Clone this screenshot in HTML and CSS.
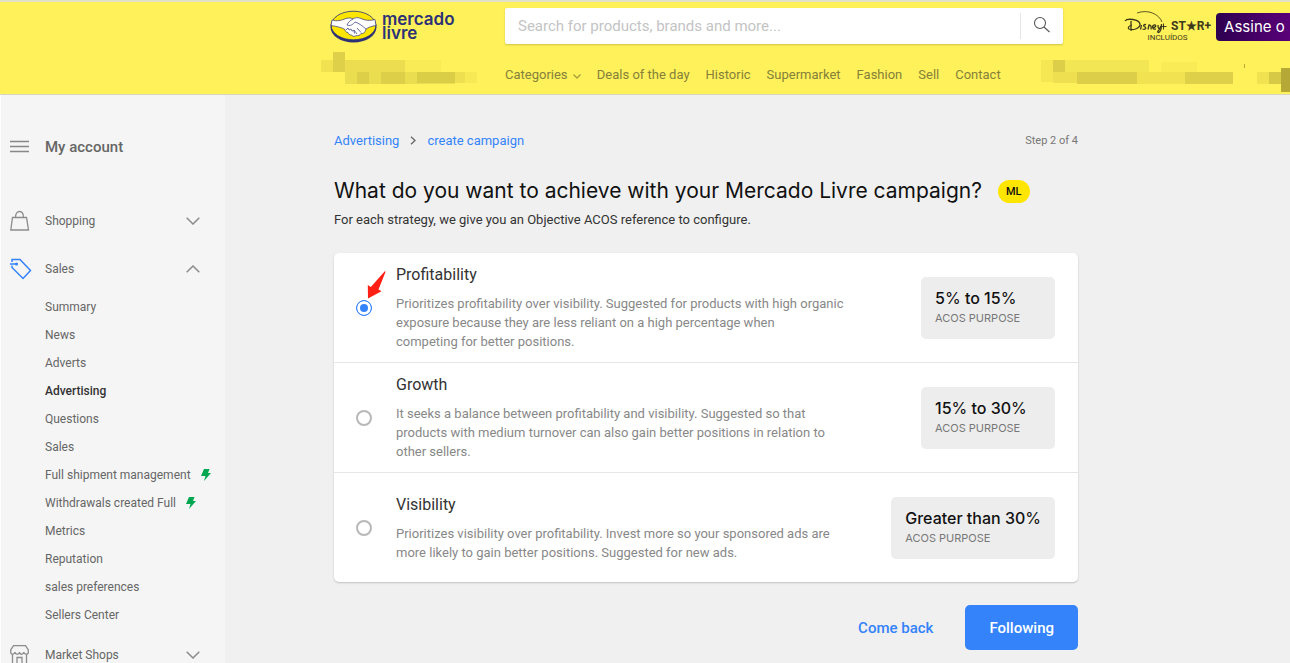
FILE: index.html
```html
<!DOCTYPE html>
<html lang="en">
<head>
    <meta charset="UTF-8">
    <meta name="viewport" content="width=device-width, initial-scale=1.0">
    <title>Create campaign</title>
    <link rel="stylesheet" href="styles.css">
</head>
<body>
    <header class="header">
        <a href="#" class="logo">
            <svg width="47" height="33" viewBox="0 0 47 33" aria-hidden="true">
                <ellipse cx="23.500" cy="17" rx="23" ry="15.500" fill="#2d3277"/>
                <ellipse cx="23.500" cy="15.500" rx="22.300" ry="14.300" fill="#ffe600" stroke="#2d3277" stroke-width=".8"/>
                <path d="M2 10c5 1.500 9 .5 14-1.500 3-1 5-.5 7 .5 2-1.500 5-2 8-.5 4 2 9 2.500 14 1l1 6c-4 .5-8 2-10 3.500-1 4-3 5-5 4.500-1 2-3 2.500-4.500 2-2 1.500-4 1-5-.5-2 0-3-1-3.500-2.500-2 0-3-1.500-3-3-3-2-8-3-14-4z" fill="#fff" stroke="#2d3277" stroke-width=".7"/>
                <path d="M23 9c-3 1.500-5 3.500-6 6 3 1.500 6-.5 8-3 4 1 8 4.500 11 7M27 18l4 4.500M24 20l3 4M16 20l2-2 1 2 2-1 1 2 2-.5.500 3" fill="none" stroke="#2d3277" stroke-width=".7"/>
            </svg>
            <span class="logo-text">mercado<br>livre</span>
        </a>
        <form class="search">
            <input type="text" class="search-input" placeholder="Search for products, brands and more..." aria-label="Search">
            <button type="button" class="search-button" aria-label="Search">
                <svg width="18" height="18" viewBox="0 0 18 18" fill="none" stroke="#555" stroke-width="1.100">
                    <circle cx="7" cy="7" r="5.500"/>
                    <path d="M11 11l5.500 5"/>
                </svg>
            </button>
        </form>
        <div class="promo">
            <div class="promo-brands">
                <div class="promo-logos">
                    <svg width="43" height="24" viewBox="0 0 43 24" role="img" aria-label="Disney+">
                        <path d="M13 2c11-4 22 1 25 9" fill="none" stroke="#4a4620" stroke-width=".9"/>
                        <path d="M1 10c2-3 14-2 15 3 .5 4-7 7-11 5-1.500-1-.5-3 3-4M7 10v10" fill="none" stroke="#3d3a1c" stroke-width="1.300"/>
                        <path d="M17.500 14l-1 4.500M22 13.500c-3 0-3 1.500-1 2.500 2 1.200 0 3-2.500 2M24 18.500l1-4.500c2 0 2.500 2 2 4.500M29 16.500c4-.5 3-3 1-2.500-2.500 1-1.500 5 2 4M34 14c0 4 1 5 3 1m.5-2c0 4-1 8-3 8.500-2 0 0-3 3-4" fill="none" stroke="#3d3a1c" stroke-width="1.300"/>
                        <path d="M36.500 15.500h6M39.500 12.500v6" stroke="#3d3a1c"/>
                    </svg>
                    <span class="star">ST★R+</span>
                </div>
                <span class="promo-note">INCLUÍDOS</span>
            </div>
            <a href="#" class="promo-button">Assine o</a>
        </div>
        <svg class="blocks" width="160" height="34" viewBox="0 0 160 34" aria-hidden="true">
            <g fill="#6b6014">
                <rect x="1" y="8" width="12" height="12" opacity=".1"/>
                <rect x="13" y="0" width="12" height="20" opacity=".22"/>
                <rect x="25" y="8" width="60" height="12" opacity=".13"/>
                <rect x="85" y="8" width="36" height="12" opacity=".04"/>
                <rect x="25" y="20" width="110" height="12" opacity=".14"/>
                <rect x="37" y="20" width="12" height="12" opacity=".1"/>
                <rect x="61" y="20" width="24" height="12" opacity=".1"/>
                <rect x="97" y="20" width="48" height="11" opacity=".12"/>
                <rect x="145" y="20" width="12" height="11" opacity=".05"/>
            </g>
        </svg>
        <nav class="nav">
            <a href="#">Categories
                <svg width="8" height="5" viewBox="0 0 8 5" fill="none" stroke="#a89d3b" stroke-width="1.300"><path d="M.5.5L4 4 7.500.5"/></svg>
            </a>
            <a href="#">Deals of the day</a>
            <a href="#">Historic</a>
            <a href="#">Supermarket</a>
            <a href="#">Fashion</a>
            <a href="#">Sell</a>
            <a href="#">Contact</a>
        </nav>
        <svg class="blocks blocks-right" width="249" height="34" viewBox="0 0 249 34" aria-hidden="true">
            <g fill="#6b6014">
                <rect x="0" y="1" width="12" height="22" opacity=".07"/>
                <rect x="12" y="1" width="12" height="12" opacity=".24"/>
                <rect x="24" y="1" width="84" height="12" opacity=".08"/>
                <rect x="120" y="3" width="36" height="10" opacity=".04"/>
                <rect x="12" y="13" width="24" height="11" opacity=".12"/>
                <rect x="36" y="13" width="60" height="12" opacity=".24"/>
                <rect x="96" y="13" width="48" height="12" opacity=".1"/>
                <rect x="144" y="13" width="48" height="12" opacity=".22"/>
                <rect x="203" y="5" width="1" height="4" opacity=".5"/>
                <rect x="216" y="13" width="12" height="12" opacity=".1"/>
                <rect x="228" y="13" width="12" height="12" opacity=".28"/>
                <rect x="240" y="9" width="9" height="24" opacity=".5"/>
            </g>
        </svg>
    </header>

    <div class="page">
        <aside class="sidebar">
            <div class="account">
                <svg class="side-icon" width="20" height="20" viewBox="0 0 20 20" stroke="#888" stroke-width="1.600"><path d="M0 4.500h19M0 9.500h19M0 14.500h19"/></svg>
                <span>My account</span>
            </div>
            <a href="#" class="group">
                <svg class="side-icon" width="20" height="22" viewBox="0 0 20 22" fill="none" stroke="#8c8c8c" stroke-width="1.300"><path d="M2.500 7.500h14l2 12.500H.8zM5.500 7.500c0-8 8-8 8 0"/></svg>
                <span>Shopping</span>
                <svg class="chevron" width="14" height="8" viewBox="0 0 14 8" fill="none" stroke="#8c8c8c" stroke-width="1.500"><path d="M.7.7L7 7 13.300.7"/></svg>
            </a>
            <a href="#" class="group">
                <svg class="side-icon" width="22" height="22" viewBox="0 0 22 22" fill="none" stroke="#3483fa" stroke-width="1.500"><path d="M2 4V1.500h8L20.500 12.500 13 20.500 2 9.500V7.500M0 6h6"/><circle cx="6.500" cy="6" r=".8"/></svg>
                <span>Sales</span>
                <svg class="chevron" width="14" height="8" viewBox="0 0 14 8" fill="none" stroke="#8c8c8c" stroke-width="1.500"><path d="M.7 7.300L7 1l6.300 6.300"/></svg>
            </a>
            <ul class="submenu">
                <li><a href="#">Summary</a></li>
                <li><a href="#">News</a></li>
                <li><a href="#">Adverts</a></li>
                <li><a href="#" class="active">Advertising</a></li>
                <li><a href="#">Questions</a></li>
                <li><a href="#">Sales</a></li>
                <li><a href="#">Full shipment management
                    <svg width="10" height="12" viewBox="0 0 10 12" fill="#00a650"><path d="M3 0h5.500L7 4h3L3 12l1.500-5H0z"/></svg></a></li>
                <li><a href="#">Withdrawals created Full
                    <svg width="10" height="12" viewBox="0 0 10 12" fill="#00a650"><path d="M3 0h5.500L7 4h3L3 12l1.500-5H0z"/></svg></a></li>
                <li><a href="#">Metrics</a></li>
                <li><a href="#">Reputation</a></li>
                <li><a href="#">sales preferences</a></li>
                <li><a href="#">Sellers Center</a></li>
            </ul>
            <a href="#" class="group">
                <svg class="side-icon" width="20" height="20" viewBox="0 0 20 20" fill="none" stroke="#8c8c8c" stroke-width="1.300"><path d="M3.500.7h12l2.800 4.300v2c0 3-4 3-4.500 0-.5 3-4 3-4.300 0-.5 3-4 3-4.500 0-.5 3-4.300 3-4.300 0V5zM2.500 9.500v10h14v-10M7 19.500v-7h5v7"/></svg>
                <span>Market Shops</span>
                <svg class="chevron" width="14" height="8" viewBox="0 0 14 8" fill="none" stroke="#8c8c8c" stroke-width="1.500"><path d="M.7.7L7 7 13.300.7"/></svg>
            </a>
        </aside>

        <main class="main">
            <div class="topline">
                <nav class="breadcrumb">
                    <a href="#">Advertising</a>
                    <svg width="6" height="9" viewBox="0 0 6 9" fill="none" stroke="#666" stroke-width="1.300"><path d="M1 .7l4 3.800L1 8.300"/></svg>
                    <a href="#">create campaign</a>
                </nav>
                <span class="step">Step 2 of 4</span>
            </div>
            <div class="title">
                <h1>What do you want to achieve with your Mercado Livre campaign?</h1>
                <span class="tag">ML</span>
            </div>
            <p class="subtitle">For each strategy, we give you an Objective ACOS reference to configure.</p>

            <form>
                <div class="card">
                    <div class="option">
                        <div class="choice">
                            <input type="radio" name="strategy" id="profitability" checked>
                            <svg class="pointer" width="19" height="28" viewBox="0 0 19 28" fill="#ff2015"><path d="M18 0l.5 1-7 17.500 3 1.800L1 27.500.8 14l3 2z"/></svg>
                        </div>
                        <label class="text" for="profitability">
                            <span class="name">Profitability</span>
                            <span class="desc">Prioritizes profitability over visibility. Suggested for products with high organic<br>exposure because they are less reliant on a high percentage when<br>competing for better positions.</span>
                        </label>
                        <div class="acos">
                            <strong>5<span>%</span> to 15<span>%</span></strong>
                            <small>ACOS PURPOSE</small>
                        </div>
                    </div>
                    <div class="option">
                        <div class="choice">
                            <input type="radio" name="strategy" id="growth">
                        </div>
                        <label class="text" for="growth">
                            <span class="name">Growth</span>
                            <span class="desc">It seeks a balance between profitability and visibility. Suggested so that<br>products with medium turnover can also gain better positions in relation to<br>other sellers.</span>
                        </label>
                        <div class="acos">
                            <strong>15<span>%</span> to 30<span>%</span></strong>
                            <small>ACOS PURPOSE</small>
                        </div>
                    </div>
                    <div class="option">
                        <div class="choice">
                            <input type="radio" name="strategy" id="visibility">
                        </div>
                        <label class="text" for="visibility">
                            <span class="name">Visibility</span>
                            <span class="desc">Prioritizes visibility over profitability. Invest more so your sponsored ads are<br>more likely to gain better positions. Suggested for new ads.</span>
                        </label>
                        <div class="acos">
                            <strong>Greater than 30<span>%</span></strong>
                            <small>ACOS PURPOSE</small>
                        </div>
                    </div>
                </div>
                <div class="actions">
                    <button type="button" class="back">Come back</button>
                    <button type="button" class="next">Following</button>
                </div>
            </form>
        </main>
    </div>
</body>
</html>
```

FILE: styles.css
```css
* {
    box-sizing: border-box;
}
body {
    margin: 0;
    font-family: Roboto, "Liberation Sans", sans-serif;
    font-size: 13px;
    color: #333;
    background: #f0f0f0;
}
a {
    color: inherit;
    text-decoration: none;
}
svg {
    flex-shrink: 0;
}

/* header */
.header {
    display: grid;
    grid-template-columns: 185px minmax(300px, 558px) minmax(0, 1fr);
    grid-template-rows: 38px 48px;
    height: 95px;
    padding: 6px 0 0 320px;
    background: #fff159;
    border-top: 2px solid #e3e0c8;
    border-bottom: 1px solid #d9d6c0;
    overflow: hidden;
}
.logo {
    display: flex;
    align-items: center;
    gap: 5px;
    height: 36px;
    padding-left: 10px;
}
.logo-text {
    font-family: Inter, sans-serif;
    font-size: 17px;
    font-weight: 600;
    line-height: 14px;
    color: #2d3277;
}
.search {
    display: flex;
    align-items: center;
    height: 36px;
    background: #fff;
    border-radius: 2px;
    box-shadow: 0 1px 2px rgba(0,0,0,0.2);
}
.search-input {
    flex: 1;
    padding: 0 13px;
    border: none;
    outline: none;
    background: none;
    font: inherit;
    font-size: 15px;
}
.search-input::placeholder {
    color: #c4c4c4;
}
.search-button {
    width: 43px;
    height: 26px;
    padding: 0;
    border: none;
    border-left: 1px solid #e6e6e6;
    background: none;
    cursor: pointer;
}
.promo {
    display: flex;
    align-items: center;
    gap: 5px;
    padding-left: 61px;
    white-space: nowrap;
}
.promo-brands {
    display: flex;
    flex-direction: column;
    align-items: center;
    color: #3d3a1c;
}
.promo-logos {
    display: flex;
    align-items: center;
    gap: 4px;
    height: 22px;
}
.star {
    padding-top: 6px;
    font-size: 12px;
    font-weight: 700;
}
.promo-note {
    font-size: 8px;
    line-height: 8px;
}
.promo-button {
    flex-grow: 1;
    padding-left: 8px;
    border-radius: 4px 0 0 4px;
    background: linear-gradient(90deg, #2d0050, #5a0078);
    font-family: Inter, sans-serif;
    font-size: 15px;
    line-height: 28px;
    color: #fff;
}
.blocks {
    margin-top: 6px;
}
.blocks-right {
    justify-self: end;
    margin-top: 13px;
}
.nav {
    display: flex;
    gap: 16px;
    padding-top: 21px;
    line-height: 16px;
    color: #85803a;
    white-space: nowrap;
}
.nav svg {
    margin-left: 2px;
}

/* sidebar */
.page {
    display: flex;
}
.sidebar {
    flex: 0 0 225px;
    padding: 28px 0 0 9px;
    border-left: 1px solid #fff;
    background: #f5f5f5;
    font-size: 12px;
    color: #666;
}
.account, .group {
    display: grid;
    grid-template-columns: 35px 1fr 39px;
    align-items: center;
    height: 48px;
}
.account {
    margin-bottom: 26px;
    font-size: 15px;
    font-weight: 500;
}
.submenu {
    margin: 0 0 2px;
    padding: 0 0 0 35px;
    list-style: none;
}
.submenu a {
    display: flex;
    align-items: center;
    gap: 10px;
    height: 28px;
    white-space: nowrap;
}
.submenu .active {
    font-weight: 500;
    color: #333;
}

/* content */
.main {
    flex: 1;
    max-width: 853px;
    padding: 36px 0 12px 109px;
}
.topline {
    display: flex;
    justify-content: space-between;
    align-items: center;
    height: 18px;
}
.breadcrumb {
    display: flex;
    align-items: center;
    gap: 11px;
    color: #3483fa;
}
.step {
    font-size: 11px;
    color: #777;
}
.title {
    display: flex;
    align-items: center;
    gap: 16px;
    margin-top: 27px;
}
.title h1 {
    margin: 0;
    font-family: Inter, sans-serif;
    font-size: 21px;
    font-weight: 400;
    line-height: 30px;
    color: #111;
    white-space: nowrap;
}
.tag {
    padding: 0 8px;
    border-radius: 12px;
    background: #ffe600;
    font-size: 11px;
    font-weight: 500;
    line-height: 23px;
    color: #111;
}
.subtitle {
    margin: 5px 0 24px;
    line-height: 18px;
}
.card {
    border-radius: 5px;
    background: #fff;
    box-shadow: 0 1px 2px rgba(0,0,0,0.2);
}
.option {
    display: flex;
    align-items: center;
    height: 110px;
    padding: 0 23px 0 22px;
    border-bottom: 1px solid #e6e6e6;
}
.option:last-child {
    height: 109px;
    border-bottom: none;
}
.choice {
    position: relative;
    width: 40px;
}
.choice input {
    display: block;
    appearance: none;
    width: 16px;
    height: 16px;
    margin: 0;
    border: 2px solid #b8b8b8;
    border-radius: 50%;
}
.choice input:checked {
    border: 1px solid #3483fa;
    background: #3483fa;
    box-shadow: inset 0 0 0 3px #fff;
}
.pointer {
    position: absolute;
    left: 11px;
    bottom: 17px;
}
.text {
    flex: 1;
}
.name, .desc {
    display: block;
}
.name {
    margin-bottom: 8px;
    font-size: 16px;
    line-height: 22px;
}
.desc {
    line-height: 19px;
    color: #888;
}
.acos {
    min-width: 134px;
    padding: 11px 14px;
    border-radius: 5px;
    background: #ededed;
    font-family: Inter, sans-serif;
}
.acos strong, .acos small {
    display: block;
    line-height: 20px;
}
.acos strong {
    font-size: 16px;
    font-weight: 500;
    color: #111;
}
.acos strong span {
    font-weight: 400;
}
.acos small {
    font-size: 11px;
    color: #777;
}
.actions {
    display: flex;
    justify-content: flex-end;
    margin-top: 23px;
}
.actions button {
    height: 45px;
    padding: 0 24px;
    border: none;
    border-radius: 5px;
    font: inherit;
    font-size: 15px;
    font-weight: 500;
    cursor: pointer;
}
.back {
    margin-right: 8px;
    background: none;
    color: #3483fa;
}
.next {
    background: #3483fa;
    color: #fff;
}
```
